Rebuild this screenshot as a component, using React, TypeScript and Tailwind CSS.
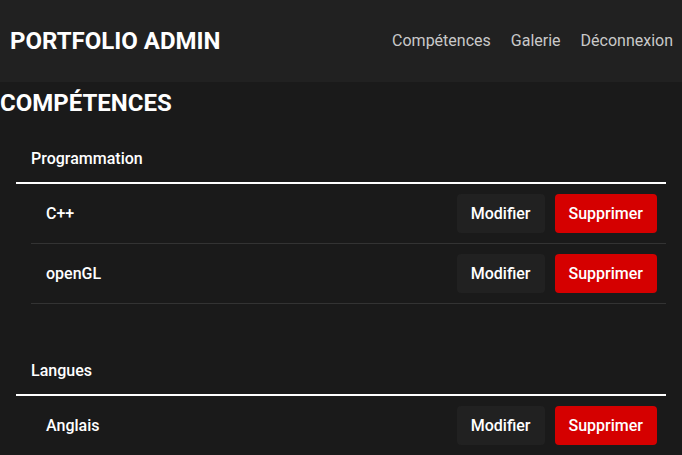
import React from "react";

type Skill = { name: string };
type Category = { title: string; skills: Skill[] };

const categories: Category[] = [
  { title: "Programmation", skills: [{ name: "C++" }, { name: "openGL" }] },
  { title: "Langues", skills: [{ name: "Anglais" }] },
];

function SkillRow({ skill }: { skill: Skill }) {
  return (
    <li className="flex items-center justify-between ml-[15px] py-[10px] pl-[15px] pr-[9px] border-b border-[#333333]">
      <span className="text-[16px] font-medium text-white">{skill.name}</span>
      <div className="flex items-center gap-[10px]">
        <button className="h-[39px] px-[14px] rounded-[4px] bg-[#212121] text-white text-[16px] font-medium">
          Modifier
        </button>
        <button className="h-[39px] px-[14px] rounded-[4px] bg-[#d50000] text-white text-[16px] font-medium">
          Supprimer
        </button>
      </div>
    </li>
  );
}

export default function App() {
  return (
    <main
      className="w-full min-h-screen bg-[#1a1a1a] text-white"
      style={{ fontFamily: "Roboto, 'Liberation Sans', sans-serif" }}
    >
      {/* Header */}
      <header className="h-[82px] bg-[#212121] flex items-center justify-between pl-[10px] pr-[9px]">
        <h1 className="text-[24px] font-bold">PORTFOLIO ADMIN</h1>
        <nav className="flex items-center gap-[20px] text-[16px] text-[#c9c9c9]">
          <a href="#">Compétences</a>
          <a href="#">Galerie</a>
          <a href="#">Déconnexion</a>
        </nav>
      </header>

      <h2 className="text-[24px] font-bold leading-[28px] mt-[7px]">COMPÉTENCES</h2>

      <div className="flex flex-col gap-[44px] mx-[16px] mt-[19px]">
        {categories.map((cat) => (
          <section key={cat.title}>
            <div className="py-3 pl-[15px] leading-[22px] text-[16px] font-medium border-b-2 border-white">
              {cat.title}
            </div>
            <ul>
              {cat.skills.map((s) => (
                <SkillRow key={s.name} skill={s} />
              ))}
            </ul>
          </section>
        ))}
      </div>
    </main>
  );
}
